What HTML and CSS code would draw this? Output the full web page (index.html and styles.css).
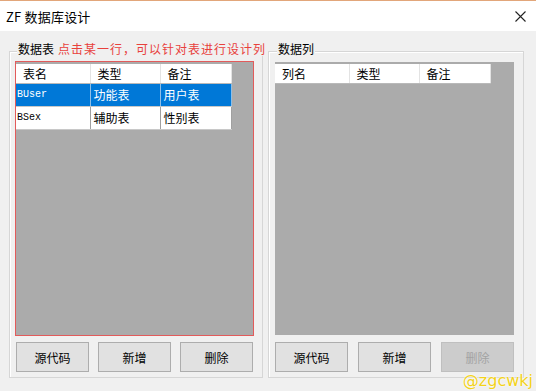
FILE: index.html
```html
<!DOCTYPE html>
<html>
<head>
<title>ZF 数据库设计</title>
<meta http-equiv="Content-Type" content="text/html; charset=UTF-8"/>
<link rel="stylesheet" href="styles.css">
</head>
<body>
<div class="window">
	<div class="titlebar">
		<span class="title">ZF 数据库设计</span>
		<svg class="close" width="11" height="11" viewBox="0 0 11 11">
			<path d="M0.5 0.5 L10.5 10.5 M10.5 0.5 L0.5 10.5" stroke="#222" stroke-width="1.1" fill="none"/>
		</svg>
	</div>
	<div class="content">
		<!-- table list -->
		<div class="group groupLeft">
			<div class="groupLabel">数据表<span class="hint">点击某一行，可以针对表进行设计列</span></div>
			<div class="grid gridMarked">
				<table class="gridTable">
					<tr class="head">
						<td class="c1">表名</td>
						<td class="c2">类型</td>
						<td class="c3">备注</td>
					</tr>
					<tr class="row selected">
						<td class="mono">BUser</td>
						<td>功能表</td>
						<td>用户表</td>
					</tr>
					<tr class="row">
						<td class="mono">BSex</td>
						<td>辅助表</td>
						<td>性别表</td>
					</tr>
				</table>
			</div>
			<div class="buttons">
				<button class="btn">源代码</button>
				<button class="btn">新增</button>
				<button class="btn">删除</button>
			</div>
		</div>
		<!-- column list -->
		<div class="group groupRight">
			<div class="groupLabel">数据列</div>
			<div class="grid gridWide">
				<table class="gridTable">
					<tr class="head">
						<td class="c1">列名</td>
						<td class="c2">类型</td>
						<td class="c3">备注</td>
					</tr>
				</table>
			</div>
			<div class="buttons">
				<button class="btn">源代码</button>
				<button class="btn">新增</button>
				<button class="btn" disabled>删除</button>
			</div>
		</div>
	</div>
	<div class="watermark">@zgcwkj</div>
</div>
</body>
</html>
```

FILE: styles.css
```css
body
{
	margin: 0;
	padding: 0;
	background-color: #f0f0f0;
	color: #000;
	font-family: "Noto Sans CJK SC", "Liberation Sans", sans-serif;
	font-size: 12px;
}

.window
{
	position: relative;
	width: 536px;
	height: 391px;
	overflow: hidden;
}

.titlebar
{
	height: 30px;
	background-color: #fff;
	border-top: 1px solid #e2a67a;
	display: flex;
	align-items: center;
	justify-content: space-between;
	padding: 0 10px 0 6px;
}

.title
{
	font-size: 13px;
	letter-spacing: 0.2px;
}

.content
{
	display: flex;
	gap: 5px;
	padding: 20px 0 0 9px;
}

.group
{
	position: relative;
	box-sizing: border-box;
	border: 1px solid #d6d6d6;
	box-shadow: inset 1px 1px 0 #fff;
	padding: 10px 9px 5px 6px;
}

.groupLeft
{
	width: 254px;
}

.groupRight
{
	width: 256px;
}

.groupLabel
{
	position: absolute;
	top: -10px;
	left: 7px;
	line-height: 14px;
	padding: 0 1px;
	background-color: #f0f0f0;
	white-space: nowrap;
}

.groupRight .groupLabel
{
	left: 8px;
}

.hint
{
	color: #e8413c;
	margin-left: 4px;
	letter-spacing: 1px;
}

.grid
{
	width: 237px;
	height: 273px;
	box-sizing: border-box;
	padding-top: 2px;
	background-color: #ababab;
}

.gridWide
{
	width: 239px;
}

.gridMarked
{
	outline: 1px solid #e25b5b;
}

.gridTable
{
	border-collapse: collapse;
	table-layout: fixed;
	width: 215px;
	font-size: 12px;
}

.gridTable td
{
	box-sizing: border-box;
	padding: 0 0 0 3px;
	white-space: nowrap;
	overflow: hidden;
}

.head td
{
	height: 19px;
	padding-left: 7px;
	background-color: #fff;
	border-right: 1px solid #e3e3e3;
	border-bottom: 1px solid #b9b9b9;
}

.c1
{
	width: 74px;
}

.c2
{
	width: 70px;
}

.c3
{
	width: 71px;
}

.row td
{
	height: 23px;
	background-color: #fff;
	border-right: 1px solid #a0a0a0;
	border-bottom: 1px solid #c8c8c8;
}

.row td.mono
{
	padding-left: 1px;
	font-family: "Liberation Mono", monospace;
	font-size: 10px;
}

.selected td
{
	background-color: #0078d7;
	color: #fff;
	border-right-color: #8dbfe8;
}

.buttons
{
	display: flex;
	justify-content: space-between;
	margin-top: 7px;
}

.btn
{
	width: 73px;
	height: 30px;
	padding: 0;
	margin: 0;
	border: 1px solid #adadad;
	background-color: #e1e1e1;
	color: #000;
	font-family: "Noto Sans CJK SC", sans-serif;
	font-size: 12px;
}

.btn:disabled
{
	border-color: #bfbfbf;
	background-color: #cccccc;
	color: #a3a3a3;
}

.watermark
{
	position: absolute;
	right: 3px;
	bottom: 1px;
	font-family: "DejaVu Sans", sans-serif;
	font-size: 16px;
	color: #f2d21a;
	text-shadow: 0 0 2px #fff, 0 0 1px #fff;
}
```
